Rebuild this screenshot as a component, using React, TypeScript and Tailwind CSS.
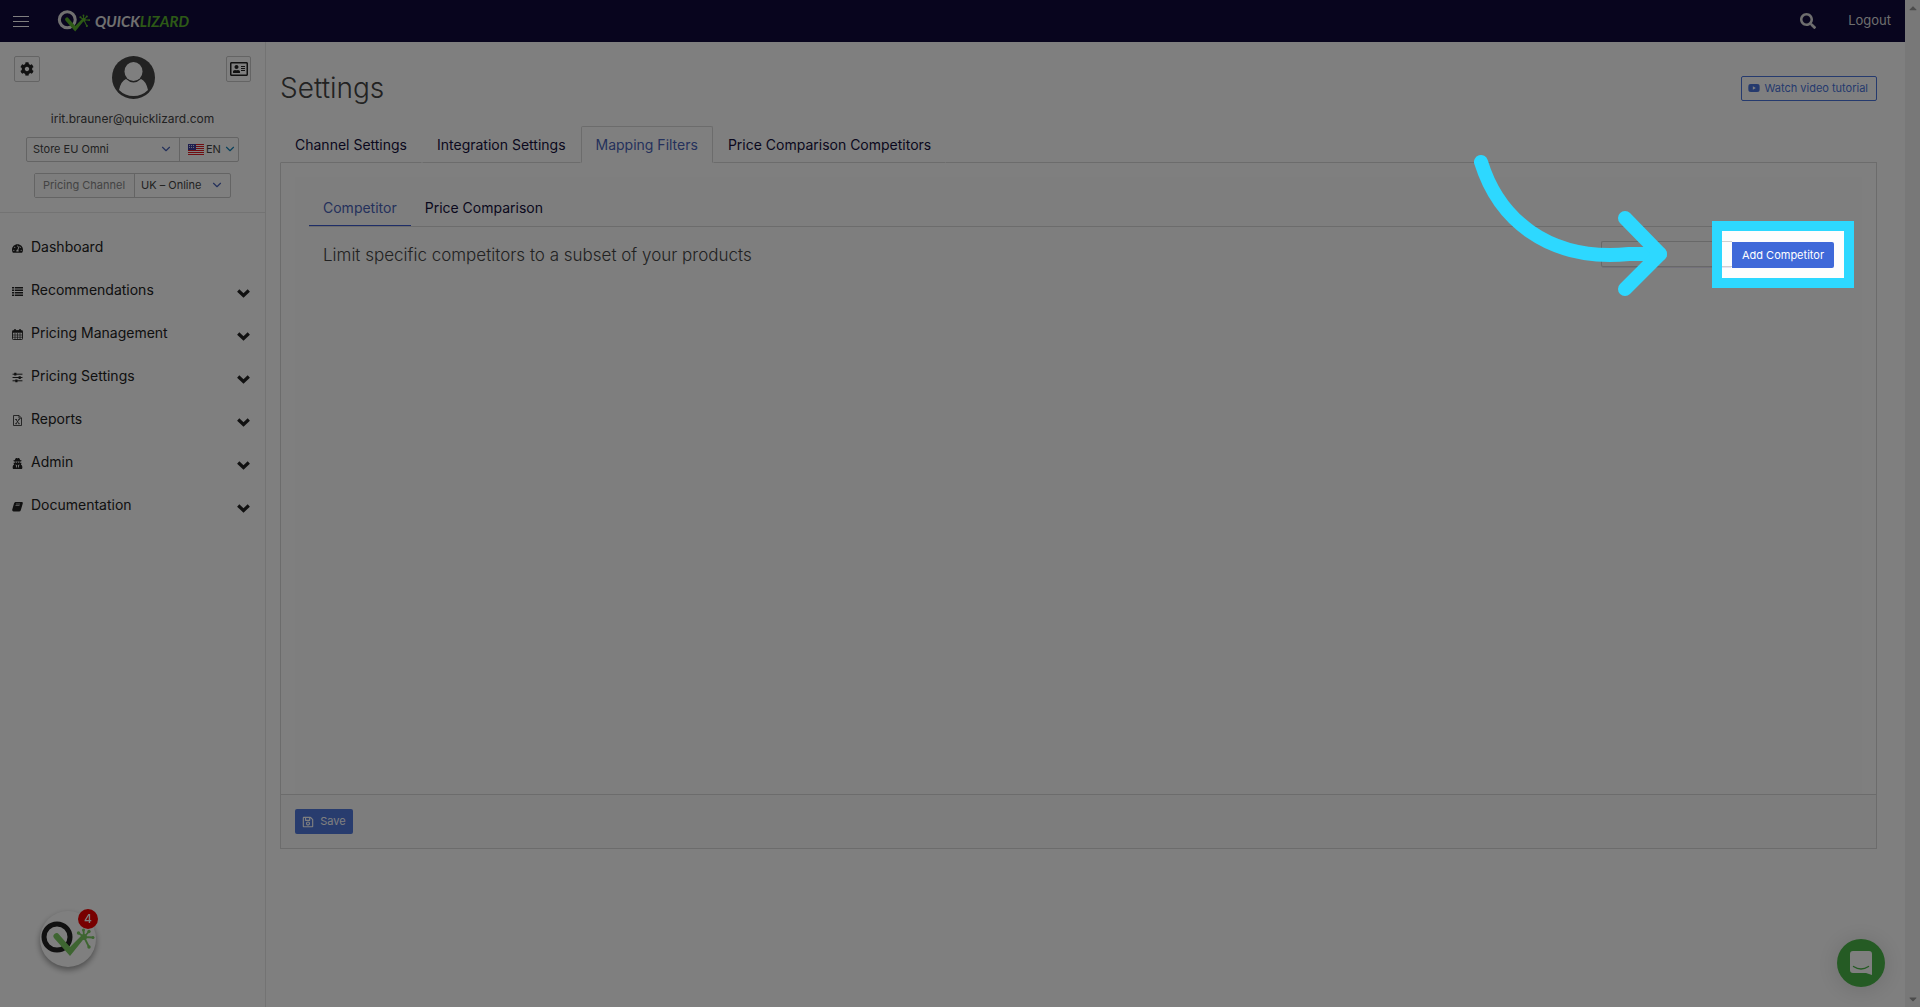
import React from 'react';
import clsx from 'clsx';
import {
    FaCaretDown,
    FaCaretUp,
    FaCog,
    FaRegAddressCard,
    FaRegSave,
    FaSearch,
    FaTachometerAlt,
    FaUserSecret,
    FaYoutube,
} from 'react-icons/fa';
import { ChevronDown } from 'lucide-react';

type IconProps = { className?: string };

interface NavItem {
    label: string;
    icon: React.ComponentType<IconProps>;
    expandable: boolean;
}

const ListIcon: React.FC<IconProps> = ({ className }) => (
    <svg viewBox="0 0 22 18" className={className} fill="currentColor" aria-hidden="true">
        <path d="M0 0h4v3H0zM0 5h4v3H0zM0 10h4v3H0zM0 15h4v3H0zM5.500 0H22v3H5.500zM5.500 5H22v3H5.500zM5.500 10H22v3H5.500zM5.500 15H22v3H5.500z" />
    </svg>
);

const CalendarIcon: React.FC<IconProps> = ({ className }) => (
    <svg viewBox="0 0 22 22" className={className} fill="none" stroke="currentColor" aria-hidden="true">
        <rect x="1" y="3" width="20" height="18" rx="1.500" strokeWidth="1.800" />
        <path d="M1 5.500h20" strokeWidth="4" />
        <path d="M6 0v6M16 0v6" strokeWidth="3" />
        <path d="M1 12h20M1 16.500h20M6 8v13M11 8v13M16 8v13" strokeWidth="1.300" />
    </svg>
);

const SlidersIcon: React.FC<IconProps> = ({ className }) => (
    <svg viewBox="0 0 20 20" className={className} fill="none" stroke="currentColor" aria-hidden="true">
        <path d="M1 4h18M1 10h18M1 16h18" strokeWidth="1.800" />
        <path d="M6 1.500v5M14 7.500v5M8 13.500v5" strokeWidth="4" />
    </svg>
);

const ExcelIcon: React.FC<IconProps> = ({ className }) => (
    <svg viewBox="0 0 18 22" className={className} fill="none" stroke="currentColor" strokeWidth="1.600" aria-hidden="true">
        <path d="M1 1H12L17 6V21H1ZM12 1V6.500H17" />
        <path d="M6 9L12 17.500M12 9L6 17.500M4.500 9H8M10.500 9H13.500M4.500 17.500H8M10.500 17.500H13.500" />
    </svg>
);

const BookIcon: React.FC<IconProps> = ({ className }) => (
    <svg viewBox="0 0 22 20" className={className} fill="currentColor" aria-hidden="true">
        <path d="M7 1H20Q22 1.500 21.500 4L18 16Q17.500 18 15.500 18H4Q2.500 18 3 16.500Q3.500 15.500 5 15.500H14.500Q16 15.500 16.500 14L20 3L21.500 3.500L17.500 17.500Q17 20 14 20H3Q0 20 .5 16L4 4Q5 1 7 1Z" />
        <path d="M6 2H18.500L15 14H3Z" />
        <path d="M8 5H16M7 8H15" stroke="#fff" strokeWidth="1.200" />
    </svg>
);

const NavChevron: React.FC<IconProps> = ({ className }) => (
    <svg viewBox="0 0 13 9" className={className} fill="none" stroke="currentColor" strokeWidth="3.200" aria-hidden="true">
        <path d="M1.200 1.500L6.500 6.500L11.800 1.500" />
    </svg>
);

const NAV_ITEMS: NavItem[] = [
    { label: 'Dashboard', icon: FaTachometerAlt, expandable: false },
    { label: 'Recommendations', icon: ListIcon, expandable: true },
    { label: 'Pricing Management', icon: CalendarIcon, expandable: true },
    { label: 'Pricing Settings', icon: SlidersIcon, expandable: true },
    { label: 'Reports', icon: ExcelIcon, expandable: true },
    { label: 'Admin', icon: FaUserSecret, expandable: true },
    { label: 'Documentation', icon: BookIcon, expandable: true },
];

const TABS = ['Channel Settings', 'Integration Settings', 'Mapping Filters', 'Price Comparison Competitors'];

const LizardMark: React.FC<{ ring: string; green: string; className?: string }> = ({ ring, green, className }) => (
    <svg viewBox="0 0 54 36" className={className} fill="none" aria-hidden="true">
        <circle cx="16" cy="16" r="13" stroke={ring} strokeWidth="5" />
        <path d="M13 17 a3 3 0 0 1 5 -3.500 L29 26 L41 14 L43.500 17 L29 35 Z" fill={green} />
        <path
            d="M43 16 L37.500 12M43 16 L42.500 9M43 16 L48 10.500M43 16 L52 16.500M43 16 L48 26"
            stroke={green}
            strokeWidth="1.800"
            strokeLinecap="round"
        />
        <g fill={green}>
            <circle cx="43" cy="16" r="3" />
            <circle cx="37.500" cy="12" r="1.700" />
            <circle cx="42.500" cy="9" r="1.500" />
            <circle cx="48" cy="10.500" r="1.700" />
            <circle cx="52" cy="16.500" r="1.500" />
            <circle cx="48" cy="26" r="1.700" />
        </g>
    </svg>
);

const UsFlag: React.FC = () => (
    <svg viewBox="0 0 16 11" className="h-[11px] w-4 shrink-0" aria-hidden="true">
        <rect width="16" height="11" fill="#fff" />
        <path d="M0 .5h16M0 2.500h16M0 4.500h16M0 6.500h16M0 8.500h16M0 10.500h16" stroke="#e01b22" />
        <rect width="8" height="6" fill="#3f3fa0" />
        <path d="M1 1.500h6M1 3.500h6" stroke="#fff" strokeWidth=".8" strokeDasharray="1 1" />
    </svg>
);

const TopBar: React.FC = () => (
    <header className="flex h-[42px] items-center bg-[#100a3c] text-[#ddd]">
        <button aria-label="Toggle menu" className="ml-[13px] flex w-4 flex-col gap-1">
            <span className="h-px bg-white" />
            <span className="h-px bg-white" />
            <span className="h-px bg-white" />
        </button>
        <a href="#" aria-label="Quicklizard" className="ml-7 flex items-center gap-1">
            <LizardMark ring="#e0e0e0" green="#5ab32c" className="h-[22px] w-[34px]" />
            <span className="font-['Lato',sans-serif] text-[15px] font-bold italic text-[#e0e0e0]">
                QUICK<span className="text-[#5ab32c]">LIZARD</span>
            </span>
        </a>
        <button aria-label="Search" className="ml-auto">
            <FaSearch className="h-4 w-4" />
        </button>
        <a href="#" className="ml-8 mr-3.5 text-[13px]">Logout</a>
    </header>
);

const Sidebar: React.FC = () => (
    <aside className="w-[266px] shrink-0 border-r border-[#e7e7e7] text-[#222]">
        <div className="flex h-[171px] flex-col items-center border-b border-[#e7e7e7] pt-3.5">
            <div className="flex w-full items-start justify-between px-3.5">
                <button aria-label="User settings" className="flex h-[26px] w-[26px] items-center justify-center rounded-xs border border-[#c8c8c8]">
                    <FaCog className="h-3.5 w-3.5" />
                </button>
                <svg viewBox="0 0 43 43" className="h-[43px] w-[43px]" aria-hidden="true">
                    <circle cx="21.500" cy="21.500" r="21.500" fill="#444" />
                    <ellipse cx="21.500" cy="15.500" rx="9" ry="9.500" fill="#fff" />
                    <path d="M7 34 Q9 25 14 23 Q21.500 30 29 23 Q34 25 36 34 Q30 40 21.500 40 Q13 40 7 34Z" fill="#fff" />
                </svg>
                <button aria-label="Account card" className="flex h-[26px] w-[25px] items-center justify-center rounded-xs border border-[#c8c8c8]">
                    <FaRegAddressCard className="h-4 w-[18px]" />
                </button>
            </div>
            <p className="mt-3 text-xs leading-4 text-[#444]">irit.brauner@quicklizard.com</p>
            <div className="mt-2.5 flex h-[25px] w-[213px] rounded-xs border border-[#c8c8c8] text-[11px] text-[#444]">
                <div className="relative flex-1 border-r border-[#c8c8c8]">
                    <select aria-label="Store" className="h-full w-full appearance-none pl-1.5">
                        <option>Store EU Omni</option>
                    </select>
                    <ChevronDown className="pointer-events-none absolute right-1.5 top-1 h-3.5 w-3.5 text-[#4a63b8]" />
                </div>
                <div className="relative flex w-[58px] items-center pl-2">
                    <UsFlag />
                    <select aria-label="Language" className="h-full flex-1 appearance-none pl-0.5">
                        <option>EN</option>
                    </select>
                    <ChevronDown className="pointer-events-none absolute right-px top-1 h-3.5 w-3.5 text-[#1583b8]" />
                </div>
            </div>
            <div className="mt-[11px] flex h-[25px] w-[197px] rounded-xs border border-[#c8c8c8] text-[11px] text-[#444]">
                <label htmlFor="channel" className="flex w-[100px] items-center border-r border-[#c8c8c8] bg-[#fafafa] pl-2 text-[#888]">
                    Pricing Channel
                </label>
                <div className="relative flex-1">
                    <select id="channel" className="h-full w-full appearance-none pl-1.5">
                        <option>UK – Online</option>
                    </select>
                    <ChevronDown className="pointer-events-none absolute right-1.5 top-1 h-3.5 w-3.5 text-[#4a63b8]" />
                </div>
            </div>
        </div>
        <nav className="pt-3">
            {NAV_ITEMS.map(({ label, icon: Icon, expandable }) => (
                <a key={label} href="#" className="flex h-[43px] items-center pl-3 pr-[15px] text-sm">
                    <Icon className="mt-1 h-[11px] w-[11px]" />
                    <span className="ml-2">{label}</span>
                    {expandable && <NavChevron className="ml-auto mt-2 h-[9px] w-[13px]" />}
                </a>
            ))}
        </nav>
    </aside>
);

// Cut-out frame around the target; its spread shadow dims the rest of the page
const Spotlight: React.FC = () => (
    <div className="pointer-events-none absolute -inset-5 z-50 border-10 border-[#2dd8ff] shadow-[0_0_0_3000px_rgba(0,0,0,0.5)]" />
);

const PointerArrow: React.FC = () => (
    <svg
        viewBox="0 0 196 142"
        className="pointer-events-none absolute -top-[87px] right-[165px] z-50 h-[142px] w-[196px]"
        fill="none"
        stroke="#2dd8ff"
        strokeWidth="14"
        strokeLinecap="round"
        strokeLinejoin="round"
        aria-hidden="true"
    >
        <path d="M8 8 C25 63 73 108 156 100 L187 100" />
        <path d="M152 64 L187 100 L152 135" />
    </svg>
);

const MappingPanel: React.FC = () => (
    <section className="border border-t-0 border-[#d8d8d8]">
        <div className="min-h-[631px] px-3.5 pt-3.5">
            <div className="min-h-[617px] bg-[#fdfdfd] px-3.5">
                <div role="tablist" className="flex border-b border-[#d8d8d8] pt-[13px] text-sm">
                    <button role="tab" aria-selected="true" className="-mb-px h-9 border-b border-[#3c5bd0] px-3.5 text-[#4a63b8]">
                        Competitor
                    </button>
                    <button role="tab" aria-selected="false" className="h-9 px-3.5 text-[#14103c]">Price Comparison</button>
                </div>
                <div className="flex items-center px-3.5 pt-3.5">
                    <h2 className="text-[17px] font-light leading-6 text-[#444]">Limit specific competitors to a subset of your products</h2>
                    <div className="relative ml-auto flex">
                        <input aria-label="Filter competitors" className="h-[26px] w-[131px] rounded-l-xs border border-r-0 border-[#d0d0d0] shadow-[0_2px_0_-1px_#e6e2f4]" />
                        <div className="relative">
                            <button className="h-[26px] w-[102px] rounded-r-xs bg-[#3f69d9] text-[11px] text-white">Add Competitor</button>
                            <Spotlight />
                            <PointerArrow />
                        </div>
                    </div>
                </div>
            </div>
        </div>
        <footer className="border-t border-[#d8d8d8] bg-[#fafafa] px-3.5 py-3.5">
            <button className="flex h-[25px] w-[58px] items-center justify-center gap-1.5 rounded-xs bg-[#5078dc] text-[11px] text-white">
                <FaRegSave className="h-3 w-3" />
                Save
            </button>
        </footer>
    </section>
);

const FloatingWidgets: React.FC = () => (
    <>
        <button aria-label="Help center" className="fixed bottom-10 left-10 h-14 w-14 rounded-full bg-white shadow-[0_3px_6px_rgba(0,0,0,0.4)]">
            <LizardMark ring="#222" green="#7ccb63" className="ml-px h-9 w-[54px]" />
            <span className="absolute -right-0.5 -top-0.5 flex h-5 w-5 items-center justify-center rounded-full bg-[#f00000] text-xs font-medium text-white">4</span>
        </button>
        <button aria-label="Open chat" className="fixed bottom-5 right-[35px] flex h-12 w-12 items-center justify-center rounded-full bg-[#4bb648] shadow-[0_2px_24px_rgba(0,0,0,0.15)]">
            <svg viewBox="0 0 22 24" className="h-6 w-[22px]" aria-hidden="true">
                <path d="M3 0H19a3 3 0 0 1 3 3V24L16 22H3a3 3 0 0 1-3-3V3a3 3 0 0 1 3-3Z" fill="#fff" />
                <path d="M3.500 15.500 Q11 20.500 18.500 15.500" stroke="#4bb648" strokeWidth="1.400" strokeLinecap="round" fill="none" />
            </svg>
        </button>
    </>
);

export default function App() {
    return (
        <div className="flex min-h-screen bg-white font-['Inter',sans-serif]">
            <div className="flex min-w-0 flex-1 flex-col">
                <TopBar />
                <div className="flex flex-1">
                    <Sidebar />
                    <main className="min-w-0 flex-1 pl-3.5 pr-7">
                        <div className="flex h-[84px] items-center justify-between pt-2">
                            <h1 className="text-[28px] font-light text-[#444]">Settings</h1>
                            <button className="flex h-[25px] items-center gap-1 rounded-xs border border-[#4a74dc] px-1.5 pr-2 text-[11px] text-[#4a74dc]">
                                <FaYoutube className="h-3 w-3" />
                                Watch video tutorial
                            </button>
                        </div>
                        <div role="tablist" className="flex text-sm">
                            {TABS.map((tab) => (
                                <button
                                    key={tab}
                                    role="tab"
                                    aria-selected={tab === 'Mapping Filters'}
                                    className={clsx(
                                        'h-[37px] border px-3.5',
                                        tab === 'Mapping Filters'
                                            ? 'rounded-t-xs border-[#d8d8d8] border-b-transparent text-[#4a63b8]'
                                            : 'border-transparent border-b-[#d8d8d8] text-[#14103c]',
                                    )}
                                >
                                    {tab}
                                </button>
                            ))}
                            <span className="flex-1 border-b border-[#d8d8d8]" />
                        </div>
                        <MappingPanel />
                    </main>
                </div>
            </div>
            <div className="flex w-[15px] flex-col items-center justify-between bg-[#f1f1f1] py-0.5 text-[#999]" aria-hidden="true">
                <FaCaretUp className="h-3 w-3" />
                <FaCaretDown className="h-3 w-3" />
            </div>
            <FloatingWidgets />
        </div>
    );
}
